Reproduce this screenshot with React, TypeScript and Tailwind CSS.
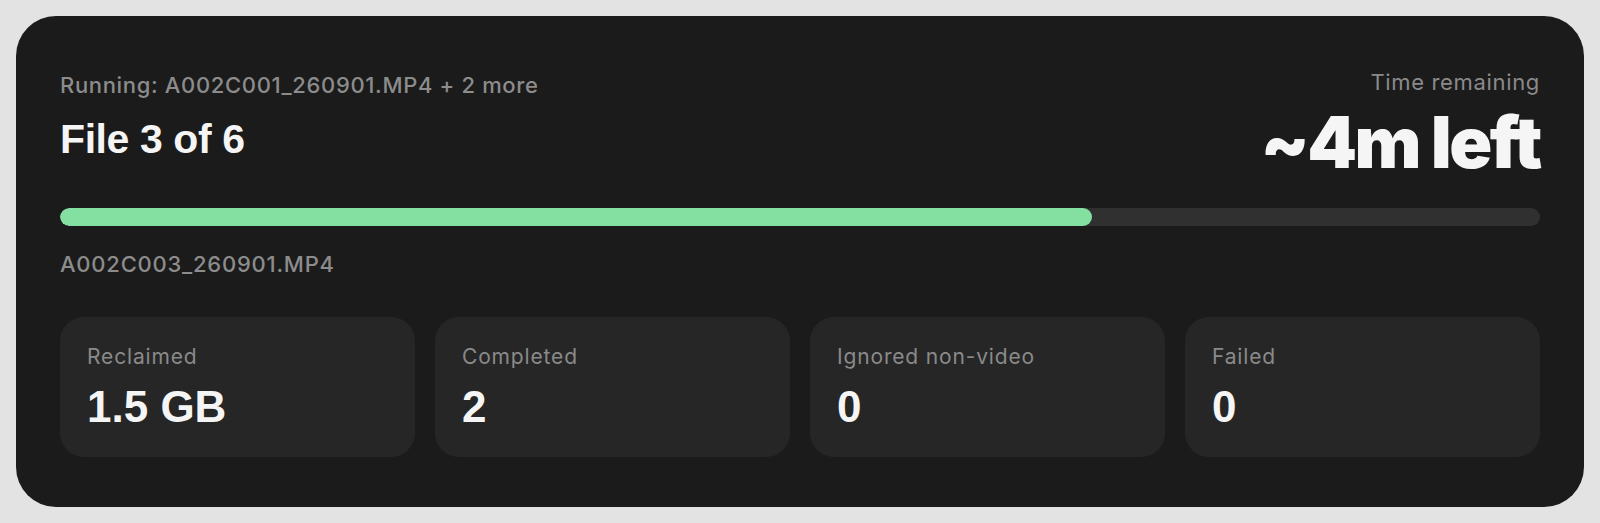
import React from 'react'

const stats = [
  { label: 'Reclaimed', value: '1.5 GB' },
  { label: 'Completed', value: '2' },
  { label: 'Ignored non-video', value: '0' },
  { label: 'Failed', value: '0' },
]

function StatCard({ label, value }: { label: string; value: string }) {
  return (
    <div className="flex flex-col rounded-[24px] bg-[#262626] px-[27px] pt-[26px] pb-[28px]">
      <span className="font-['Inter',sans-serif] text-[21px] leading-[28px] tracking-[0.04em] text-[#8a8a8a]">
        {label}
      </span>
      <span className="mt-[14px] font-['Liberation_Sans',Arial,sans-serif] text-[44px] leading-[44px] font-bold text-[#f5f5f5]">
        {value}
      </span>
    </div>
  )
}

export default function App() {
  const progress = 69.7

  return (
    <div className="min-h-screen bg-[#e3e3e3] p-4">
      <div className="flex flex-col rounded-[40px] bg-[#1b1b1b] px-[44px] pt-[52px] pb-[50px]">
        {/* Header */}
        <div className="flex items-start justify-between">
          <div className="flex flex-col pt-[3px]">
            <span className="font-['Inter',sans-serif] text-[22px] leading-[28px] font-medium tracking-[0.03em] text-[#8c8c8c]">
              Running: A002C001_260901.MP4 + 2 more
            </span>
            <span className="mt-[18px] font-['Liberation_Sans',Arial,sans-serif] text-[41px] leading-[44px] font-bold tracking-[-0.01em] text-[#f5f5f5]">
              File 3 of 6
            </span>
          </div>
          <div className="flex flex-col items-end">
            <span className="font-['Inter',sans-serif] text-[22px] leading-[28px] tracking-[0.03em] text-[#8a8a8a]">
              Time remaining
            </span>
            <span className="mt-[11px] font-['Inter',sans-serif] text-[71px] leading-[70px] font-black tracking-[-0.035em] text-[#f5f5f5]">
              ~4m left
            </span>
          </div>
        </div>

        {/* Progress */}
        <div className="mt-[31px] h-[18px] w-full overflow-hidden rounded-full bg-[#303030]">
          <div className="h-full rounded-full bg-[#84e0a0]" style={{ width: `${progress}%` }} />
        </div>
        <span className="mt-[22px] font-['Inter',sans-serif] text-[22px] leading-[32px] font-medium tracking-[0.035em] text-[#8c8c8c]">
          A002C003_260901.MP4
        </span>

        {/* Stats */}
        <div className="mt-[37px] grid grid-cols-4 gap-5">
          {stats.map((s) => (
            <StatCard key={s.label} label={s.label} value={s.value} />
          ))}
        </div>
      </div>
    </div>
  )
}
